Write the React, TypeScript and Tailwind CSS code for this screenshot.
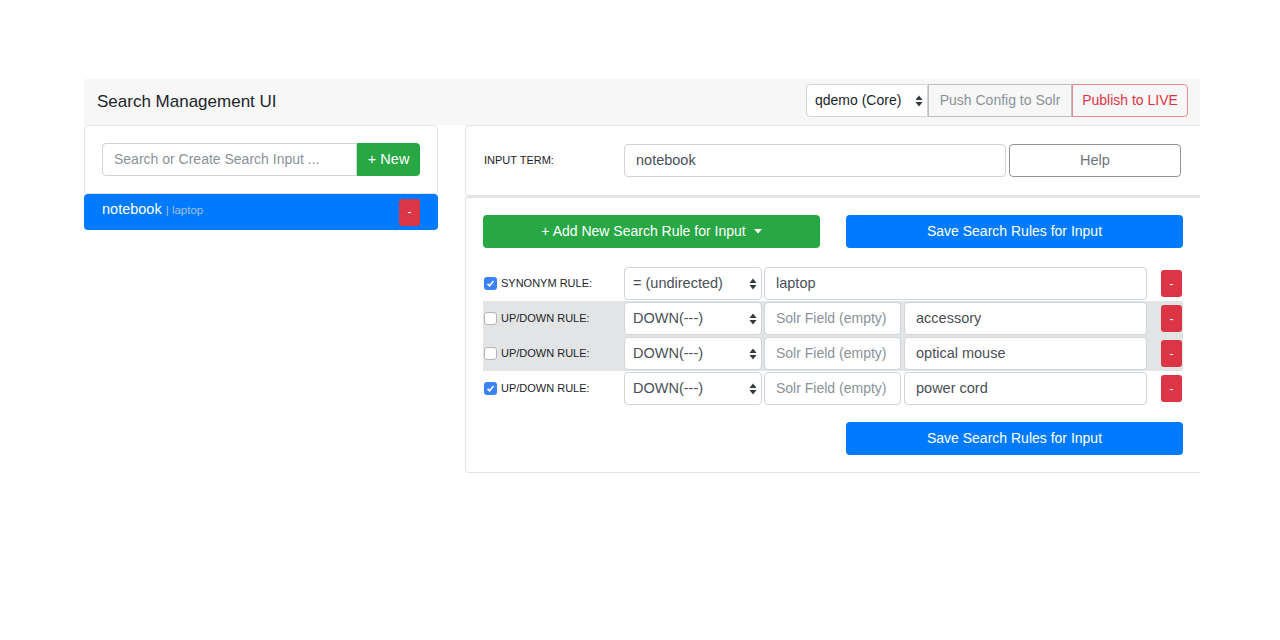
import React from 'react';

const font = { fontFamily: '"Liberation Sans", Arial, sans-serif' };

function Arrows() {
  return (
    <svg width="8" height="12" viewBox="0 0 8 12" className="shrink-0">
      <path d="M4 0.5 L7.5 5 L0.5 5 Z" fill="#343a40" />
      <path d="M4 11.5 L7.5 7 L0.5 7 Z" fill="#343a40" />
    </svg>
  );
}

function Select({ label, className }: { label: string; className: string }) {
  return (
    <div
      className={`flex items-center justify-between h-[33px] bg-white border border-[#ced4da] rounded pl-[8px] pr-[4px] text-[14.5px] text-[#495057] whitespace-nowrap ${className}`}
    >
      <span>{label}</span>
      <Arrows />
    </div>
  );
}

function Field({ value, placeholder, className }: { value?: string; placeholder?: string; className: string }) {
  return (
    <div
      className={`flex items-center h-[33px] bg-white border border-[#ced4da] rounded px-[11px] whitespace-nowrap overflow-hidden ${
        value ? 'text-[#495057] text-[14.5px]' : 'text-[#8a9299] text-[14px]'
      } ${className}`}
    >
      {value || placeholder}
    </div>
  );
}

function Check({ on }: { on: boolean }) {
  return on ? (
    <span className="w-[13px] h-[13px] rounded-[3px] bg-[#3b82f6] flex items-center justify-center">
      <svg width="9" height="9" viewBox="0 0 9 9">
        <path d="M1.5 4.8 L3.6 6.8 L7.5 2" stroke="white" strokeWidth="1.6" fill="none" />
      </svg>
    </span>
  ) : (
    <span className="w-[13px] h-[13px] rounded-[3px] bg-white border border-[#b5b5b5]" />
  );
}

function Minus() {
  return (
    <span className="w-[21px] h-[27px] rounded-[3px] bg-[#dc3545] text-white text-[12px] flex items-center justify-center">
      -
    </span>
  );
}

const rules = [
  { on: false, type: 'UP/DOWN RULE:', term: 'accessory', gray: true },
  { on: false, type: 'UP/DOWN RULE:', term: 'optical mouse', gray: true },
  { on: true, type: 'UP/DOWN RULE:', term: 'power cord', gray: false },
];

export default function App() {
  return (
    <div className="w-[1280px] h-[640px] bg-white pt-[79px] pl-[84px]" style={font}>
      <div className="w-[1116px]">
        {/* navbar */}
        <div className="h-[46px] bg-[#f7f7f8] flex items-center justify-between pl-[13px] pr-[12px] pb-[3px]">
          <span className="text-[17px] text-[#212529] mt-[3px]">Search Management UI</span>
          <div className="flex items-center">
            <Select label="qdemo (Core)" className="w-[122px] !text-[14px] !text-[#212529] rounded-r-none border-[#b9bec3]" />
            <div className="h-[33px] w-[144px] flex items-center justify-center border border-[#b9bec3] text-[#8a9299] text-[14px]">
              Push Config to Solr
            </div>
            <div className="h-[33px] w-[116px] flex items-center justify-center border border-[#e58a93] rounded-r text-[#dc3545] text-[14px]">
              Publish to LIVE
            </div>
          </div>
        </div>

        <div className="flex gap-[27px]">
          {/* left column */}
          <div className="w-[354px] shrink-0">
            <div className="h-[69px] border border-[#e2e4e7] rounded flex items-center px-[17px]">
              <div className="h-[33px] w-[256px] border border-[#ced4da] rounded-l flex items-center px-[11px] text-[14px] text-[#8a9299] whitespace-nowrap">
                Search or Create Search Input ...
              </div>
              <div className="h-[33px] w-[63px] bg-[#28a745] rounded-r flex items-center justify-center text-white text-[14.5px]">
                + New
              </div>
            </div>
            <div className="h-[36px] bg-[#007bff] rounded flex items-center justify-between pl-[18px] pr-[18px]">
              <span className="text-white text-[14.5px] -mt-[4px]">
                notebook <span className="text-[11.5px] text-[#a3bfdc]">| laptop</span>
              </span>
              <Minus />
            </div>
          </div>

          {/* right column */}
          <div className="w-[735px]">
            <div className="h-[71px] border border-r-0 border-[#e2e4e7] rounded-l flex items-center pl-[18px] pr-[19px]">
              <span className="w-[140px] text-[11px] text-[#212529]">INPUT TERM:</span>
              <Field value="notebook" className="w-[382px]" />
              <div className="ml-[3px] h-[33px] w-[172px] border border-[#8d949a] rounded flex items-center justify-center text-[14.5px] text-[#6c757d]">
                Help
              </div>
            </div>
            <div className="border border-r-0 border-t-2 border-[#e2e4e7] rounded-l pt-[17px] pb-[17px] pl-[17px] pr-[17px]">
              <div className="flex justify-between">
                <div className="w-[337px] h-[33px] bg-[#28a745] rounded flex items-center justify-center gap-[8px] text-white text-[14px]">
                  <span>+ Add New Search Rule for Input</span>
                  <svg width="8" height="5" viewBox="0 0 8 5">
                    <path d="M0 0 L8 0 L4 4.5 Z" fill="white" />
                  </svg>
                </div>
                <div className="w-[337px] h-[33px] bg-[#007bff] rounded flex items-center justify-center text-white text-[14px]">
                  Save Search Rules for Input
                </div>
              </div>

              <div className="mt-[18px]">
                <div className="h-[35px] flex items-center">
                  <div className="w-[141px] flex items-center gap-[4px] pl-[1px]">
                    <Check on />
                    <span className="text-[11px] text-[#212529]">SYNONYM RULE:</span>
                  </div>
                  <Select label="= (undirected)" className="w-[138px]" />
                  <Field value="laptop" className="ml-[2px] w-[383px]" />
                  <div className="ml-[14px]">
                    <Minus />
                  </div>
                </div>
                {rules.map((r, i) => (
                  <div
                    key={i}
                    className={`h-[35px] flex items-center ${r.gray ? 'bg-[#e3e4e6]' : ''}`}
                  >
                    <div className="w-[141px] flex items-center gap-[4px] pl-[1px]">
                      <Check on={r.on} />
                      <span className="text-[11px] text-[#212529]">{r.type}</span>
                    </div>
                    <Select label="DOWN(---)" className="w-[138px]" />
                    <Field placeholder="Solr Field (empty)" className="ml-[2px] w-[137px]" />
                    <Field value={r.term} className="ml-[3px] w-[243px]" />
                    <div className="ml-[14px]">
                      <Minus />
                    </div>
                  </div>
                ))}
              </div>

              <div className="flex justify-end mt-[16px]">
                <div className="w-[337px] h-[33px] bg-[#007bff] rounded flex items-center justify-center text-white text-[14px]">
                  Save Search Rules for Input
                </div>
              </div>
            </div>
          </div>
        </div>
      </div>
    </div>
  );
}
